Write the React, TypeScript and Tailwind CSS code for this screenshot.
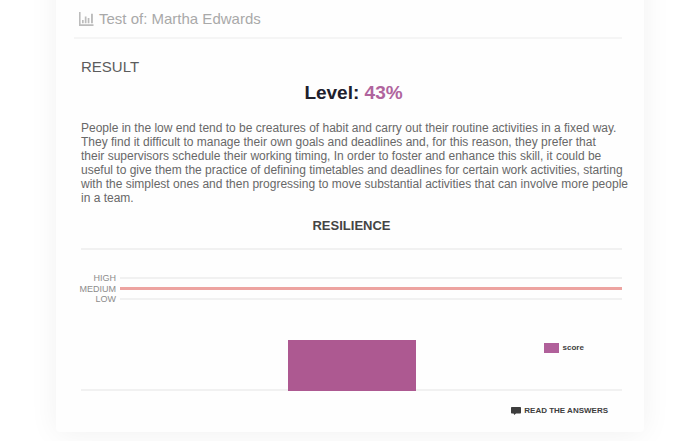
const levels = [
  { label: 'HIGH', row: 'h-[10px]', line: 'h-[2px] bg-[#f1f1f1]' },
  { label: 'MEDIUM', row: 'h-[11px]', line: 'h-[3px] bg-[#eda3a0]' },
  { label: 'LOW', row: 'h-[10px]', line: 'h-[2px] bg-[#f1f1f1]' },
];

const description = [
  'People in the low end tend to be creatures of habit and carry out their routine activities in a fixed way.',
  'They find it difficult to manage their own goals and deadlines and, for this reason, they prefer that',
  'their supervisors schedule their working timing, In order to foster and enhance this skill, it could be',
  'useful to give them the practice of defining timetables and deadlines for certain work activities, starting',
  'with the simplest ones and then progressing to move substantial activities that can involve more people',
  'in a team.',
];

function ChartIcon() {
  return (
    <svg width="15" height="14" viewBox="0 0 15 14" fill="#bcbcbc" aria-hidden="true">
      <path d="M0 0h1.6v12.2H14.500V14H0z" />
      <path d="M3 8h1.700v3.300H3zM5.800 4.500h1.700v6.800H5.800zM8.700 6h1.700v5.300H8.700zM12 1.800h1.900v9.500H12z" />
    </svg>
  );
}

function CommentIcon() {
  return (
    <svg width="10" height="8" viewBox="0 0 10 8" fill="#3d3d3d" aria-hidden="true">
      <path d="M.8 0h8.400a.8.8 0 0 1 .8.8v5a.8.8 0 0 1-.8.8H5L3.200 8 2.600 6.600H.8a.8.8 0 0 1-.8-.8v-5A.8.8 0 0 1 .8 0z" />
    </svg>
  );
}

export default function App() {
  return (
    <main className="min-h-screen overflow-hidden bg-white px-14 pb-2 font-['Liberation_Sans',Arial,sans-serif]">
      <article className="-mt-10 rounded-b-sm bg-[#fefefe] pt-[50px] pr-[22px] pb-4 pl-[18px] shadow-[0_2px_30px_#0000000f]">
        <header className="flex items-center gap-[5px] border-b-2 border-[#f5f5f5] pb-[9px] pl-[5px]">
          <ChartIcon />
          <h1 className="text-[15px] leading-[18px] text-[#a9a9a9]">Test of: Martha Edwards</h1>
        </header>

        <div className="pl-[7px]">
          <section>
            <h2 className="pt-[19px] text-[15px] leading-[18px] text-[#5c5c5c]">RESULT</h2>
            <p className="mt-[5px] pl-1 text-center text-[19px] leading-6 font-bold text-[#20202c]">
              Level: <span className="text-[#b0649d]">43%</span>
            </p>
            <p className="mt-4 text-[12px] leading-[14px] text-[#686868]">
              {description.map((line) => (
                <span key={line} className="block sm:whitespace-nowrap">
                  {line}{' '}
                </span>
              ))}
            </p>
          </section>

          <section>
            <h2 className="pt-[13px] text-center text-[13px] leading-4 font-bold text-[#444]">RESILIENCE</h2>
            <div className="mt-[14px] border-y-2 border-[#f1f1f1] pt-[23px]">
              {levels.map((level) => (
                <div key={level.label} className={`flex items-center gap-1 ${level.row}`}>
                  <span className="flex w-[35px] justify-end text-[9px] leading-[10px] text-[#8c8c8c]">
                    {level.label}
                  </span>
                  <span className={`flex-1 ${level.line}`} />
                </div>
              ))}
              <div className="-mb-[2px] grid grid-cols-[1fr_128px_1fr] pt-9">
                <div className="col-start-2 h-[51px] bg-[#ad5991]" />
                <div className="flex items-center gap-1 self-start pt-[3px] pl-32">
                  <span className="h-[10px] w-[15px] bg-[#b0609a]" />
                  <span className="text-[8px] leading-[10px] font-bold text-[#3d3d3d]">score</span>
                </div>
              </div>
            </div>
            <div className="flex justify-end pt-[15px] pr-[14px]">
              <button type="button" className="flex items-center gap-[3px] text-[8px] leading-[10px] font-bold text-[#3d3d3d]">
                <CommentIcon />
                READ THE ANSWERS
              </button>
            </div>
          </section>
        </div>
      </article>
    </main>
  );
}
